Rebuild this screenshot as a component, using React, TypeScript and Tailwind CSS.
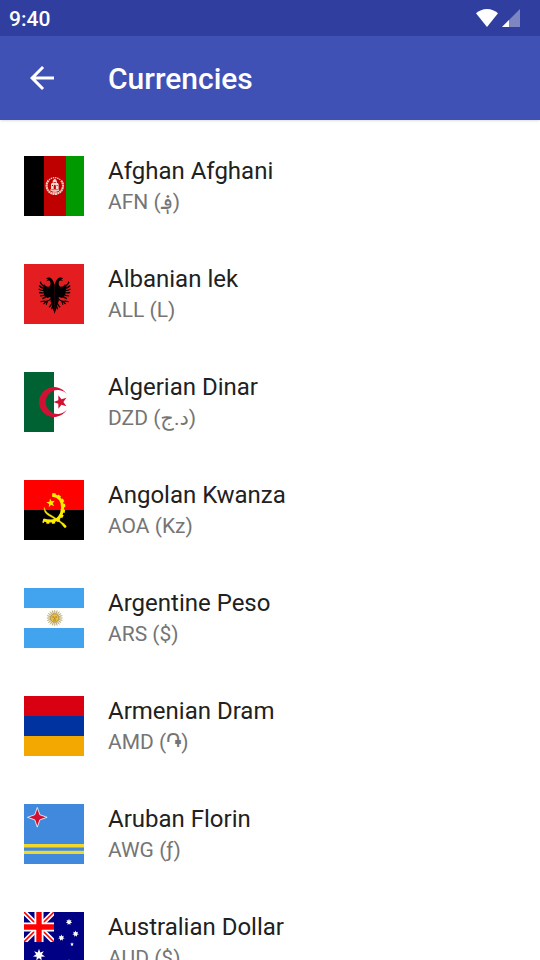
import type { ReactNode } from "react";

const rays = (count: number): number[] => Array.from({ length: count }, (_, i) => (i * 360) / count);

function starPoints(cx: number, cy: number, outer: number, inner: number, tips: number, start = -90): string {
  return Array.from({ length: tips * 2 }, (_, i) => {
    const r = i % 2 === 0 ? outer : inner;
    const a = ((start + (i * 180) / tips) * Math.PI) / 180;
    return `${(cx + r * Math.cos(a)).toFixed(2)},${(cy + r * Math.sin(a)).toFixed(2)}`;
  }).join(" ");
}

function Flag({ children }: { children: ReactNode }) {
  return (
    <svg viewBox="0 0 60 60" className="size-15 shrink-0" aria-hidden="true">
      {children}
    </svg>
  );
}

function Afghanistan() {
  return (
    <Flag>
      <rect width="60" height="60" fill="#000" />
      <rect x="20" width="40" height="60" fill="#bf0000" />
      <rect x="42" width="18" height="60" fill="#009a00" />
      <g fill="none" stroke="#f3cfc4">
        <path d="M24.5 24.5a8.2 8.2 0 1 0 12.6 0" strokeWidth="2.1" strokeDasharray="1.9 .4" />
        <path d="M25 24a8.4 8.4 0 0 1 11.600 0" strokeWidth="1.3" strokeDasharray="1.4 .8" />
        <path d="M26.4 33.6a6 6 0 0 0 8.8 0" strokeWidth="1" />
      </g>
      <path d="M27 33.5v-5.6l1-1h.7v-1.4c.4-1.6 1.2-2.4 2.1-2.8.9.4 1.7 1.2 2.1 2.8v1.4h.7l1 1v5.6z" fill="#f6dcd2" />
      <path d="M29.7 33v-3.2l1.1-1.4 1.1 1.4V33zM28 29h1v1h-1zM32.6 29h1v1h-1zM29.5 26.3h2.6v.6h-2.6z" fill="#bf0000" />
      <path d="M26.5 34.6h8.6M28.5 36.8h4.6" stroke="#f3cfc4" strokeWidth="1" />
    </Flag>
  );
}

function EagleHalf() {
  return (
    <g>
      <path d="M30.700 21.500c-.7-3.500-2-6.300-4-7.500-1.800-.9-3.600-.4-4.500.9l1.900.2-1.800 1.600 2.600-.2c1 .3 1.500 1.200 1.600 2.400.1 1.600-.4 2.900-1.400 3.600-2.100.7-3.900-.4-4.800-2.200l-1.600 1.200 1.300 9 3 3.500 3.500-1-.1 4 1.700 3.500 1 5 1.600 4.300z" />
      <g fill="none" stroke="#000" strokeWidth="1.300">
        <path d="M21.500 22.500c-2.300-.3-4.400-1.900-5.200-4.700" />
        <path d="M22 24.500c-2.600 0-5.200-.9-6.900-3" />
        <path d="M22 26.500c-2.500.4-5.100 0-7.300-1.500" />
        <path d="M22.500 28c-2.500 1-5 1.200-7.500.5" />
        <path d="M23 29.500c-2 1.600-4.300 2.400-6.900 2.400" />
        <path d="M24 30.500c-1.500 2-3.300 3.400-5.600 4.200" />
        <path d="M27 34.500c-1.800 2.600-4 3.200-7 2.600l-3.500.7M22.500 37.300l-3 2.700M23.500 37l-1.300 3.700" strokeWidth="1.100" />
        <path d="M28 39c-.7 2-1.700 3.300-3 4.200M29 41l-1.400 4.300" />
      </g>
    </g>
  );
}

function Albania() {
  return (
    <Flag>
      <rect width="60" height="60" fill="#e41e20" />
      <EagleHalf />
      <g transform="translate(61.2 0) scale(-1 1)">
        <EagleHalf />
      </g>
    </Flag>
  );
}

function Algeria() {
  return (
    <Flag>
      <rect width="60" height="60" fill="#fff" />
      <rect width="30" height="60" fill="#006233" />
      <path d="M43 22.400a15 15 0 1 0 0 15.200a12 12 0 1 1 0-15.200z" fill="#d21034" />
      <polygon points={starPoints(36.6, 30, 7.2, 2.8, 5, 180)} fill="#d21034" />
    </Flag>
  );
}

function Angola() {
  return (
    <Flag>
      <rect width="60" height="60" fill="#000" />
      <rect width="60" height="30" fill="#f00" />
      <g fill="none" stroke="#ffec00">
        <path d="M28.500 15.200c6.500.8 10 5.600 10 11.800 0 8.500-4.600 14-11.500 14-3 0-5.200-.3-7.700-1.200" strokeWidth="3" />
        <path d="M28.300 14.800c7.500.6 11.200 5.700 11.200 12.200 0 9-5 15-12.500 15-3.200 0-5.500-.3-8.200-1.200" strokeWidth="3.600" strokeDasharray="3 2.200" />
      </g>
      <path d="M20.300 27.500c-.5 3.800 1.300 6.300 4.300 8 4.500 2.600 8.500 4.600 12.200 7.500l3.400 4.300c.8 1 2.500 0 1.900-1.200-.7-1.600-3-3-4.700-4.100-5-3.500-8.300-5.700-11.600-7.600-3-1.700-4.800-3.700-5.500-6.900z" fill="#ffec00" stroke="#ffec00" strokeWidth=".5" />
      <polygon points={starPoints(26.8, 23, 4.6, 1.9, 5, -100)} fill="#ffec00" />
    </Flag>
  );
}

function Argentina() {
  return (
    <Flag>
      <rect width="60" height="60" fill="#42a3ee" />
      <rect y="20" width="60" height="20" fill="#fff" />
      <circle cx="30.700" cy="30" r="7" fill="#f0e8cc" />
      <g stroke="#b3a67c" strokeWidth=".8">
        {rays(20).map((a) => (
          <path key={a} d="M30.700 26v-4" transform={`rotate(${a} 30.700 30)`} />
        ))}
      </g>
      <circle cx="30.700" cy="30" r="4.200" fill="#edc042" stroke="#a58a42" strokeWidth=".8" />
      <path d="M28.300 29h1.800M31.300 29h1.800M30.700 29.500v1.500M29.300 32h2.800" stroke="#7a5a18" strokeWidth=".7" />
    </Flag>
  );
}

function Armenia() {
  return (
    <Flag>
      <rect width="60" height="20" fill="#d90012" />
      <rect y="20" width="60" height="20" fill="#0033a0" />
      <rect y="40" width="60" height="20" fill="#f2a800" />
    </Flag>
  );
}

function Aruba() {
  return (
    <Flag>
      <rect width="60" height="60" fill="#4189dd" />
      <path d="M0 40h60v3.400H0zM0 46.700h60v3.300H0z" fill="#f1d92b" />
      <polygon points={starPoints(13.3, 13.3, 9.8, 3.6, 4)} fill="#d21034" stroke="#fff" strokeWidth=".8" />
    </Flag>
  );
}

function Australia() {
  return (
    <Flag>
      <rect width="60" height="60" fill="#000084" />
      <path d="M0 0l30 30M30 0L0 30" stroke="#fff" strokeWidth="5" />
      <path d="M0 0l30 30M30 0L0 30" stroke="#f00" strokeWidth="1.600" />
      <path d="M15 0v30M0 15h30" stroke="#fff" strokeWidth="9" />
      <path d="M15 0v30M0 15h30" stroke="#f00" strokeWidth="5.400" />
      <path d="M0 30h30v30H0zM30 0h30v60H30z" fill="#000084" />
      <g fill="#fff">
        <polygon points={starPoints(15, 43, 6.2, 2.9, 7)} />
        <polygon points={starPoints(45, 10, 3.3, 1.7, 7)} />
        <polygon points={starPoints(37.4, 25.7, 3.3, 1.7, 7)} />
        <polygon points={starPoints(51.6, 21.7, 3.3, 1.7, 7)} />
        <polygon points={starPoints(48, 32.3, 2, 0.9, 5)} />
        <polygon points={starPoints(45, 50.5, 3.3, 1.7, 7)} />
      </g>
    </Flag>
  );
}

const currencies = [
  { code: "AFN", symbol: "؋", name: "Afghan Afghani", flag: <Afghanistan /> },
  { code: "ALL", symbol: "L", name: "Albanian lek", flag: <Albania /> },
  { code: "DZD", symbol: "د.ج", name: "Algerian Dinar", flag: <Algeria /> },
  { code: "AOA", symbol: "Kz", name: "Angolan Kwanza", flag: <Angola /> },
  { code: "ARS", symbol: "$", name: "Argentine Peso", flag: <Argentina /> },
  { code: "AMD", symbol: "֏", name: "Armenian Dram", flag: <Armenia /> },
  { code: "AWG", symbol: "ƒ", name: "Aruban Florin", flag: <Aruba /> },
  { code: "AUD", symbol: "$", name: "Australian Dollar", flag: <Australia /> },
];

function StatusBar() {
  return (
    <div className="flex h-9 items-center justify-between bg-[#303f9f] pr-5 pl-[9px] text-white">
      <span className="pt-0.5 text-[21px] leading-7 font-medium">9:40</span>
      <div className="flex items-center gap-1">
        <svg viewBox="0 0 22 18" className="h-[18px] w-[22px]" aria-hidden="true">
          <path d="M11 18L0 4.300C3 1.600 6.800 0 11 0s8 1.600 11 4.300z" fill="#fff" />
        </svg>
        <svg viewBox="0 0 18 18" className="size-[18px]" aria-hidden="true">
          <path d="M18 0v18H0z" fill="#7c86c3" />
          <path d="M7 11v7H0z" fill="#fff" />
        </svg>
      </div>
    </div>
  );
}

export default function App() {
  return (
    <div className="flex h-screen flex-col overflow-hidden bg-white font-[Roboto,'Noto_Sans','DejaVu_Sans',sans-serif]">
      <header className="z-10 shrink-0 shadow-sm">
        <StatusBar />
        <div className="flex h-21 items-center gap-12 bg-[#3f51b5] px-6 text-white">
          <button type="button" aria-label="Back" className="size-9">
            <svg viewBox="0 0 24 24" className="size-9" fill="currentColor" aria-hidden="true">
              <path d="M20 11H7.830l5.590-5.590L12 4l-8 8 8 8 1.410-1.410L7.830 13H20v-2z" />
            </svg>
          </button>
          <h1 className="pt-0.5 text-[30px] leading-9 font-medium">Currencies</h1>
        </div>
      </header>
      <main className="min-h-0 flex-1 overflow-y-auto [scrollbar-width:none]">
        <ul className="pt-3">
          {currencies.map((c) => (
            <li key={c.code}>
              <button type="button" className="flex w-full items-center gap-6 p-6 text-left">
                {c.flag}
                <span className="flex flex-col gap-0.5">
                  <span className="h-[30px] text-2xl leading-[30px] text-[#212121]">{c.name}</span>
                  <span className="h-7 text-[21px] leading-7 text-[#757575]">
                    {c.code} ({c.symbol})
                  </span>
                </span>
              </button>
            </li>
          ))}
        </ul>
      </main>
    </div>
  );
}
